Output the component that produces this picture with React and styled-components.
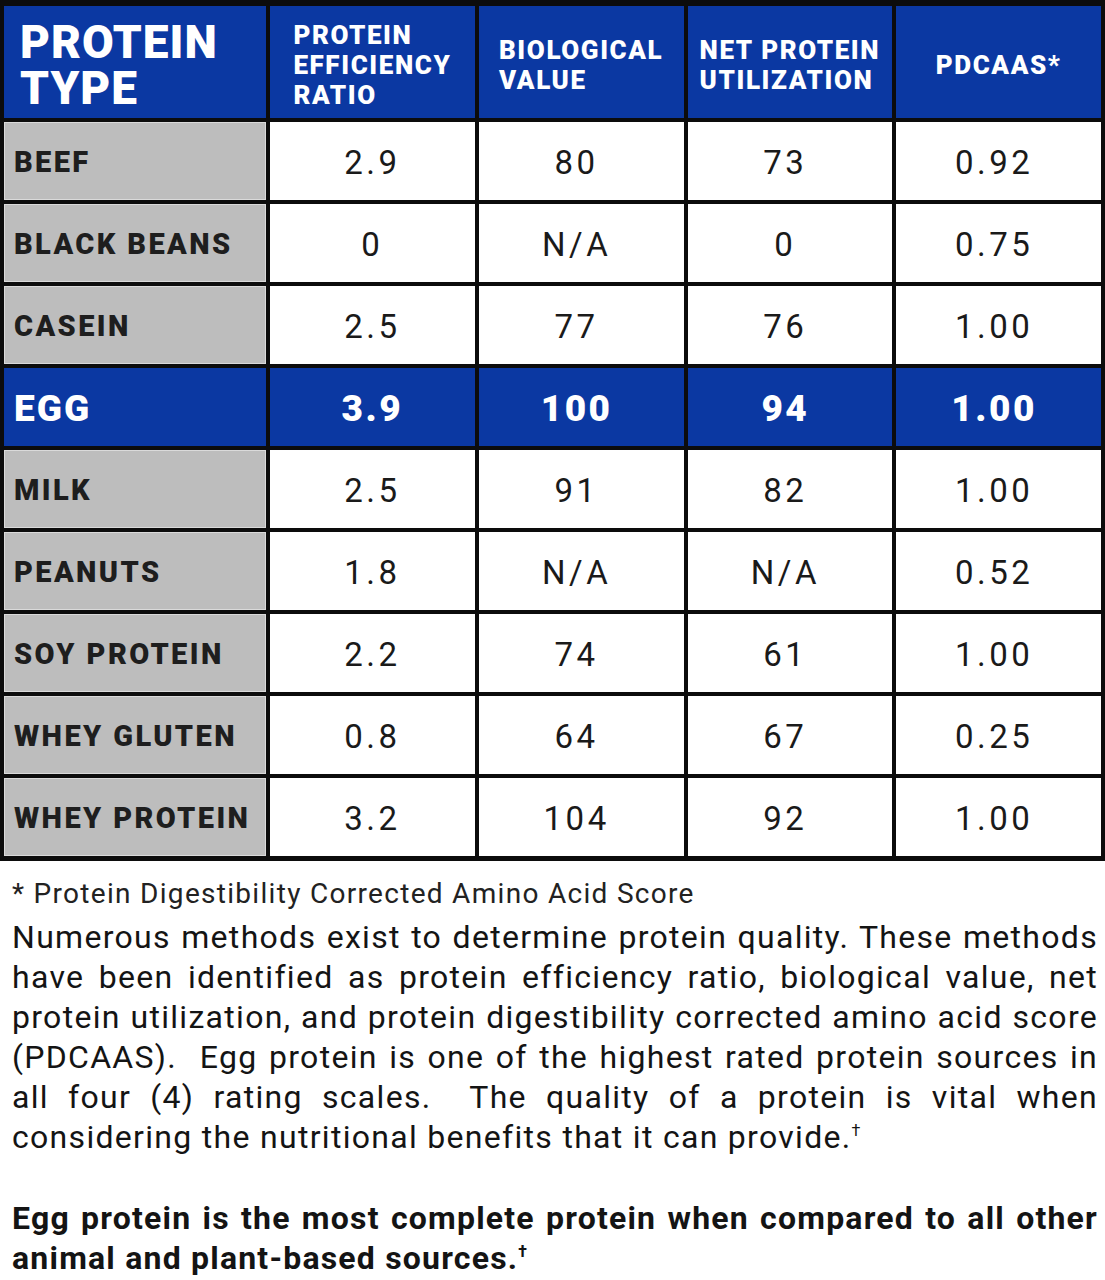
import React from "react";
import styled, { createGlobalStyle } from "styled-components";

const GlobalStyle = createGlobalStyle`
  body {
    margin: 0;
    background: #ffffff;
    font-family: Roboto, "Liberation Sans", Arial, sans-serif;
  }
`;

// 전체 레이아웃
const Page = styled.div`
  width: 1105px;
  background: #ffffff;
  color: #1c1c1c;
`;

// 표
const Table = styled.div`
  display: grid;
  grid-template-columns: 262px repeat(4, 1fr);
  grid-template-rows: 112px repeat(9, 78px);
  gap: 4px 4px;
  padding: 6px 4px 5px 4px;
  background: #0c0c0c;
  box-sizing: border-box;
`;

const HeadCell = styled.div`
  background: #0b38a2;
  color: #ffffff;
  display: flex;
  align-items: center;
  justify-content: ${(p) => (p.$first ? "flex-start" : "center")};
  padding: ${(p) => (p.$first ? "6px 16px 0" : "6px 8px 0")};
  font-weight: 900;
  font-size: ${(p) => (p.$first ? "46px" : "26px")};
  line-height: ${(p) => (p.$first ? "46px" : "30px")};
  letter-spacing: ${(p) => (p.$first ? "1px" : "1.6px")};
  text-align: left;
`;

const LabelCell = styled.div`
  background: ${(p) => (p.$hl ? "#0b38a2" : "#bdbdbd")};
  color: ${(p) => (p.$hl ? "#ffffff" : "#1e1e1e")};
  box-shadow: ${(p) => (p.$hl ? "none" : "inset 0 0 0 1px #dadada")};
  display: flex;
  align-items: center;
  padding: 2px 10px 0;
  font-weight: 900;
  font-size: ${(p) => (p.$hl ? "37px" : "29px")};
  letter-spacing: ${(p) => (p.$hl ? "2px" : "2.4px")};
  white-space: nowrap;
`;

const ValueCell = styled.div`
  background: ${(p) => (p.$hl ? "#0b38a2" : "#ffffff")};
  color: ${(p) => (p.$hl ? "#ffffff" : "#1a1a1a")};
  display: flex;
  align-items: center;
  justify-content: center;
  padding: 2px ${(p) => (p.$shift ? "9px" : "0")} 0 0;
  font-weight: ${(p) => (p.$hl ? 900 : 400)};
  font-size: ${(p) => (p.$hl ? "37px" : "33px")};
  letter-spacing: ${(p) => (p.$hl ? "2.5px" : "3.5px")};
`;

// 아래 설명 텍스트
const Notes = styled.div`
  padding: 13px 7px 0 12px;
`;

const Footnote = styled.div`
  font-size: 28px;
  line-height: 40px;
  letter-spacing: 1.3px;
  color: #222222;
`;

const Paragraph = styled.div`
  margin-top: ${(p) => (p.$bold ? "41px" : "3px")};
  font-size: 32px;
  line-height: 40px;
  letter-spacing: ${(p) => (p.$bold ? "1.2px" : "1.3px")};
  font-weight: ${(p) => (p.$bold ? 700 : 400)};
  color: #141414;
`;

const Line = styled.div`
  white-space: nowrap;
  text-align: ${(p) => (p.$last ? "left" : "justify")};
  text-align-last: ${(p) => (p.$last ? "left" : "justify")};
`;

const Dagger = styled.sup`
  font-size: 16px;
  line-height: 0;
  vertical-align: 12px;
`;

const headers = [
  ["PROTEIN", "TYPE"],
  ["PROTEIN", "EFFICIENCY", "RATIO"],
  ["BIOLOGICAL", "VALUE"],
  ["NET PROTEIN", "UTILIZATION"],
  ["PDCAAS*"],
];

const rows = [
  { name: "BEEF", values: ["2.9", "80", "73", "0.92"] },
  { name: "BLACK BEANS", values: ["0", "N/A", "0", "0.75"] },
  { name: "CASEIN", values: ["2.5", "77", "76", "1.00"] },
  { name: "EGG", values: ["3.9", "100", "94", "1.00"], hl: true },
  { name: "MILK", values: ["2.5", "91", "82", "1.00"] },
  { name: "PEANUTS", values: ["1.8", "N/A", "N/A", "0.52"] },
  { name: "SOY PROTEIN", values: ["2.2", "74", "61", "1.00"] },
  { name: "WHEY GLUTEN", values: ["0.8", "64", "67", "0.25"] },
  { name: "WHEY PROTEIN", values: ["3.2", "104", "92", "1.00"] },
];

const bodyLines = [
  "Numerous methods exist to determine protein quality. These methods",
  "have been identified as protein efficiency ratio, biological value, net",
  "protein utilization, and protein digestibility corrected amino acid score",
  "(PDCAAS).\u00a0 Egg protein is one of the highest rated protein sources in",
  "all four (4) rating scales.\u00a0 The quality of a protein is vital when",
];

const App = () => {
  return (
    <Page>
      <GlobalStyle />
      <Table>
        {headers.map((lines, i) => (
          <HeadCell key={i} $first={i === 0}>
            <div>
              {lines.map((l) => (
                <div key={l}>{l}</div>
              ))}
            </div>
          </HeadCell>
        ))}

        {rows.map((row) => (
          <React.Fragment key={row.name}>
            <LabelCell $hl={row.hl}>{row.name}</LabelCell>
            {row.values.map((v, j) => (
              <ValueCell key={j} $hl={row.hl} $shift={j > 0}>
                {v}
              </ValueCell>
            ))}
          </React.Fragment>
        ))}
      </Table>

      <Notes>
        <Footnote>* Protein Digestibility Corrected Amino Acid Score</Footnote>
        <Paragraph>
          {bodyLines.map((l) => (
            <Line key={l}>{l}</Line>
          ))}
          <Line $last>
            considering the nutritional benefits that it can provide.
            <Dagger>†</Dagger>
          </Line>
        </Paragraph>
        <Paragraph $bold>
          <Line>Egg protein is the most complete protein when compared to all other</Line>
          <Line $last>
            animal and plant-based sources.<Dagger>†</Dagger>
          </Line>
        </Paragraph>
      </Notes>
    </Page>
  );
};

export default App;
